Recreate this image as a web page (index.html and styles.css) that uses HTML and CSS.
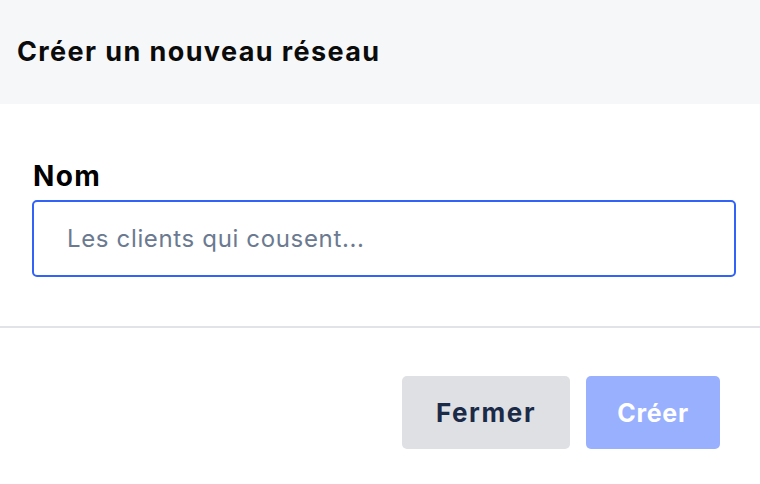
FILE: index.html
```html
<!DOCTYPE html>
<html lang="fr">
<head>
<meta charset="utf-8">
<link rel="stylesheet" href="styles.css">
</head>
<body>
<div class="modal">
  <header class="modal-header">
    <h1 class="modal-title">Créer un nouveau réseau</h1>
  </header>
  <section class="modal-body">
    <label class="field-label" for="nom">Nom</label>
    <div class="field-input"><span class="placeholder">Les clients qui cousent...</span></div>
  </section>
  <footer class="modal-footer">
    <button class="btn btn-secondary">Fermer</button>
    <button class="btn btn-primary">Créer</button>
  </footer>
</div>
</body>
</html>
```
FILE: styles.css
```css
html, body {
  margin: 0;
  padding: 0;
  background: #ffffff;
}
body {
  font-family: "Inter", "Open Sans", sans-serif;
  width: 760px;
  height: 484px;
  overflow: hidden;
}
.modal {
  display: flex;
  flex-direction: column;
}
.modal-header {
  height: 104px;
  background: #f6f7f9;
  display: flex;
  align-items: center;
  padding-left: 17px;
  padding-bottom: 2px;
  box-sizing: border-box;
}
.modal-title {
  margin: 0;
  font-size: 27px;
  font-weight: 700;
  color: #0b0b0b;
  letter-spacing: 1.4px;
}
.modal-body {
  padding: 57px 24px 0 32px;
  box-sizing: border-box;
  border-bottom: 2px solid #e2e3e8;
  height: 224px;
}
.field-label {
  display: block;
  font-size: 28px;
  font-weight: 700;
  color: #000;
  margin-left: 1px;
  line-height: 30px;
  letter-spacing: 1.4px;
}
.field-input {
  margin-top: 9px;
  height: 77px;
  box-sizing: border-box;
  border: 2px solid #3363f6;
  border-radius: 5px;
  display: flex;
  align-items: center;
  padding-left: 33px;
}
.placeholder {
  font-size: 24px;
  color: #6b7a90;
  letter-spacing: 0.65px;
}
.modal-footer {
  display: flex;
  justify-content: flex-end;
  gap: 16px;
  padding: 48px 40px 0 0;
}
.btn {
  height: 73px;
  border: none;
  border-radius: 5px;
  font-family: inherit;
  font-size: 25px;
  font-weight: 700;
  letter-spacing: 0.7px;
  cursor: pointer;
}
.btn-secondary {
  width: 168px;
  background: #dfe0e4;
  color: #1b2b47;
  font-size: 26px;
  letter-spacing: 1.6px;
}
.btn-primary {
  width: 134px;
  background: #99b0ff;
  color: #ffffff;
}
```
